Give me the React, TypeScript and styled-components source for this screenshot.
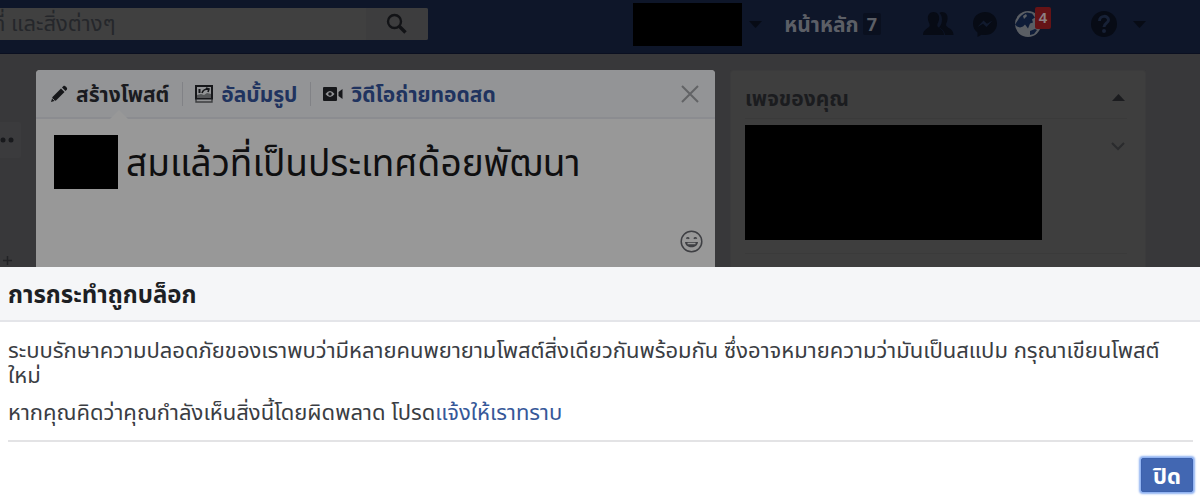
import React from "react";
import styled, { createGlobalStyle } from "styled-components";

const GlobalStyle = createGlobalStyle`
  *, *::before, *::after { box-sizing: border-box; }
  body {
    margin: 0;
    overflow-x: hidden;
    background: #fff;
    font-family: "Noto Sans", "Noto Sans Thai", "Liberation Sans", sans-serif;
  }
  button, input { font-family: inherit; }
  button { cursor: pointer; }
`;

const Page = styled.div`
  display: flex;
  flex-direction: column;
`;

const Dimmed = styled.div`
  background: #38383a;
  overflow: hidden;
`;

const NavBar = styled.header`
  display: flex;
  justify-content: space-between;
  align-items: flex-start;
  height: 54px;
  padding-right: 54px;
  background: #0e1629;
  border-bottom: 1px solid #0a0f20;
`;

const SearchForm = styled.form`
  display: flex;
  flex: 0 1 428px;
  min-width: 200px;
  height: 32px;
  margin-top: 8px;
  background: #404040;
  border-radius: 0 2px 2px 0;
  overflow: hidden;
`;

const SearchInput = styled.input`
  flex: 1;
  min-width: 0;
  height: 28px;
  margin-left: -8px;
  padding: 0;
  border: 0;
  outline: 0;
  background: transparent;
  font-size: 22px;
  color: #25272b;
  &::placeholder { color: #25272b; opacity: 1; }
`;

const SearchButton = styled.button`
  display: flex;
  align-items: center;
  justify-content: center;
  width: 62px;
  padding: 0;
  border: 0;
  background: #3d3d3e;
  color: #121316;
`;

const NavItems = styled.nav`
  display: flex;
  align-items: center;
  height: 48px;
`;

const Redacted = styled.div<{ $w: number; $h: number }>`
  flex: none;
  width: ${(p) => p.$w}px;
  height: ${(p) => p.$h}px;
  background: #000;
`;

const NavButton = styled.button<{ $gap: number }>`
  position: relative;
  display: flex;
  flex: none;
  align-items: center;
  margin-left: ${(p) => p.$gap}px;
  padding: 0;
  border: 0;
  background: none;
  color: #070b15;
`;

const HomeLink = styled.a`
  display: flex;
  align-items: center;
  gap: 4px;
  margin-left: 22px;
  font-size: 21px;
  line-height: 24px;
  font-weight: 700;
  color: #5c5f66;
  text-decoration: none;
  white-space: nowrap;
`;

const HomeCount = styled.span`
  padding: 0 4px;
  border-radius: 2px;
  background: #0a101f;
  font-size: 18px;
  line-height: 22px;
`;

const Alert = styled.span`
  position: absolute;
  top: -3px;
  right: -9px;
  width: 16px;
  border-radius: 2px;
  background: #651316;
  color: #8d8083;
  font: 700 15px/22px "Liberation Sans", sans-serif;
  text-align: center;
`;

const Columns = styled.div`
  display: grid;
  grid-template-columns: 21px minmax(0, 679fr) minmax(0, 416fr);
  column-gap: 15px;
  padding: 16px 54px 0 0;
`;

const LeftRail = styled.div`
  display: flex;
  flex-direction: column;
  justify-content: space-between;
  padding: 52px 0 2px;
`;

const MoreButton = styled.button`
  display: flex;
  align-items: center;
  height: 36px;
  padding: 0;
  border: 0;
  border-radius: 0 2px 2px 0;
  background: #3b3b3d;
  color: #18191c;
`;

const AddButton = styled.button`
  display: flex;
  padding: 0 0 0 3px;
  border: 0;
  background: none;
  color: #222326;
`;

const Composer = styled.section`
  display: flex;
  flex-direction: column;
  height: 197px;
  border-radius: 4px 4px 0 0;
  background: #989898;
  overflow: hidden;
`;

const ComposerTabs = styled.div`
  display: flex;
  align-items: center;
  height: 49px;
  padding: 0 16px 0 14px;
  background: #939496;
  border-bottom: 2px solid #8b8c90;
`;

const Tab = styled.button<{ $active?: boolean }>`
  position: relative;
  display: flex;
  flex: none;
  align-items: center;
  gap: 8px;
  height: 24px;
  padding: 0;
  border: 0;
  background: none;
  color: ${(p) => (p.$active ? "#1a1b1f" : "#20335f")};
  font-size: 21px;
  line-height: 24px;
  font-weight: 700;
  white-space: nowrap;
  & + & {
    margin-left: 13px;
    padding-left: 12px;
    border-left: 1px solid #818286;
  }
  svg { color: #16171a; }
`;

const TabPointer = styled.span`
  position: absolute;
  left: 60px;
  bottom: -13px;
  border: 9px solid transparent;
  border-top: 0;
  border-bottom-color: #989898;
`;

const CloseButton = styled.button`
  display: flex;
  margin-left: auto;
  padding: 0;
  border: 0;
  background: none;
  color: #626366;
`;

const ComposerBody = styled.div`
  display: flex;
  flex: 1;
  gap: 8px;
  padding: 16px 12px 14px 18px;
`;

const PostText = styled.p`
  flex: 1;
  margin: 0;
  color: #0f0f10;
  font-size: 37px;
  line-height: 54px;
  white-space: nowrap;
`;

const EmojiButton = styled.button`
  align-self: flex-end;
  display: flex;
  padding: 0;
  border: 0;
  background: none;
  color: #3e3f43;
`;

const PagesCard = styled.aside`
  padding: 0 18px 0 14px;
  border: 1px solid #3b3b3c;
  border-bottom: 0;
  border-radius: 3px 3px 0 0;
  background: #3e3e3e;
`;

const CardHeader = styled.div`
  display: flex;
  align-items: center;
  justify-content: space-between;
  height: 48px;
  padding: 6px 2px 0 0;
  color: #1b1c1f;
  border-bottom: 1px solid #3a3a3a;
`;

const CardTitle = styled.h2`
  margin: 0;
  font-size: 21px;
  line-height: 24px;
  font-weight: 700;
`;

const CardRow = styled.div`
  display: flex;
  justify-content: space-between;
  padding: 6px 2px 13px 0;
  border-bottom: 1px solid #3a3a3a;
  color: #2a2b2d;
`;

const RowToggle = styled.button`
  align-self: flex-start;
  display: flex;
  margin-top: 16px;
  padding: 0;
  border: 0;
  background: none;
  color: inherit;
`;

const Dialog = styled.section`
  background: #fff;
  color: #3a3d43;
`;

const DialogTitle = styled.h1`
  margin: 0;
  padding: 14px 8px 13px;
  border-bottom: 2px solid #e4e5e9;
  background: #f5f6f8;
  color: #1d1f24;
  font-size: 24px;
  line-height: 26px;
  font-weight: 700;
`;

const DialogBody = styled.div`
  margin: 0 7px 0 8px;
  padding: 15px 0 16px;
  border-bottom: 2px solid #e3e3e5;
`;

const Message = styled.p`
  margin: 0;
  font-size: 22px;
  line-height: 25px;
  & + & { margin-top: 12px; }
  a { color: #365899; text-decoration: none; }
`;

const DialogFooter = styled.footer`
  display: flex;
  justify-content: flex-end;
  padding: 16px 7px 9px;
`;

const PrimaryButton = styled.button`
  height: 34px;
  padding: 0 11px;
  border: 1px solid #3c61ad;
  border-radius: 2px;
  background: #4267b2;
  box-shadow: 0 0 2px 2px #8fb2f2;
  color: #fff;
  font-size: 22px;
  line-height: 24px;
  font-weight: 700;
`;

const Caret = ({ up = false }: { up?: boolean }) => (
  <svg width="13" height="7" viewBox="0 0 13 7" aria-hidden="true">
    <path d={up ? "M0 7 6.500 0 13 7Z" : "M0 0h13L6.500 7Z"} fill="currentColor" />
  </svg>
);

const SearchIcon = () => (
  <svg width="22" height="22" viewBox="0 0 22 22" fill="none" stroke="currentColor" aria-hidden="true">
    <circle cx="8.500" cy="8.500" r="6.500" strokeWidth="2.400" />
    <path d="m13.500 13.500 6 6" strokeWidth="3.400" />
  </svg>
);

const FriendsIcon = () => (
  <svg width="31" height="26" viewBox="0 0 31 26" fill="currentColor" aria-hidden="true">
    <path d="M19 1c4 0 6 3 5.500 7-.2 3-1.500 4-1.500 6 0 3 7.500 3 7.500 10H22c-.5-4-3-6-6-7.500 2-2 3-5 3-8 0-3-1-5-2.500-6.500C17.200 1.300 18 1 19 1Z" />
    <path d="M10.500 1c4 0 6 3 5.600 7-.3 3-1.800 4-1.800 6.500 0 3 6.700 3 6.700 9.500H0c0-6.500 6.700-6.500 6.700-9.500C6.700 12 5.200 11 4.900 8 4.500 4 6.500 1 10.500 1Z" />
  </svg>
);

const MessengerIcon = () => (
  <svg width="26" height="27" viewBox="0 0 26 27" aria-hidden="true">
    <path d="M13 1C6 1 1 6 1 12.500c0 4 1.700 7 4.500 9V26l4-2.300c1.200.3 2.300.4 3.500.4 7 0 12-5 12-11.600S20 1 13 1Z" fill="currentColor" />
    <path d="m5.500 16 6-6.500 3.500 3.300 5.500-3.300-6 6.500-3.500-3.300Z" fill="#111a2e" />
  </svg>
);

const GlobeIcon = () => (
  <svg width="28" height="28" viewBox="0 0 28 28" aria-hidden="true">
    <circle cx="14" cy="14" r="13" fill="#5a5e64" />
    <path d="M4 10c2-4 5-6.500 9-7.500l5 1 3 4-3 2 1 3-3 1-2 5-3-4-2 2-3 1-3-1-2-2Z" fill="#0e1c38" />
    <path d="m9 6 3-2 1 2-3 3Z" fill="#5a5e64" />
    <path d="m16 21 5-2 2 1-3 4-4 1Z" fill="#0e1c38" />
  </svg>
);

const HelpIcon = () => (
  <svg width="28" height="28" viewBox="0 0 28 28" fill="none" aria-hidden="true">
    <circle cx="14" cy="14" r="13" fill="currentColor" />
    <path d="M9.500 11c0-6 9-6 9-1 0 3-4.500 3.500-4.500 7" stroke="#172136" strokeWidth="3" />
    <circle cx="14" cy="21" r="2" fill="#172136" />
  </svg>
);

const PencilIcon = () => (
  <svg width="18" height="18" viewBox="0 0 18 18" fill="currentColor" aria-hidden="true">
    <path d="m1 17 1.500-5L11 3.500 14.500 7 6 15.500Z" />
    <path d="m12 2.500 1.500-1.500c1-1 4.500 2 3.400 3.400L15.500 6Z" />
    <path d="m2.200 13.300 2.500 2.500" stroke="#939496" strokeWidth="1" />
  </svg>
);

const AlbumIcon = () => (
  <svg width="18" height="18" viewBox="0 0 18 18" fill="none" stroke="currentColor" aria-hidden="true">
    <rect x="1" y="1" width="16" height="12.500" strokeWidth="2" />
    <path d="M1 14v3h16v-3" strokeWidth="1.400" opacity=".7" />
    <path d="M2 12v-2l4-1 3 1 3-2 4 1v3Z" fill="currentColor" stroke="none" opacity=".5" />
    <path d="M4.500 4v4" strokeWidth="2" />
    <path d="M7 8c1-3 3-4 6-4M11 3l3 1-1 3" strokeWidth="1.600" />
  </svg>
);

const VideoIcon = () => (
  <svg width="20" height="14" viewBox="0 0 20 14" aria-hidden="true">
    <path d="M1 0h12q1 0 1 1v12q0 1-1 1H1q-1 0-1-1V1q0-1 1-1Z" fill="currentColor" />
    <path d="m15.500 5 4-3v10l-4-3Z" fill="currentColor" />
    <path d="M2.500 7Q7 1 11.500 7 7 13 2.500 7Z" fill="#939496" />
    <circle cx="7" cy="7" r="1.800" fill="currentColor" />
  </svg>
);

const CloseIcon = () => (
  <svg width="18" height="18" viewBox="0 0 18 18" fill="none" stroke="currentColor" strokeWidth="2" aria-hidden="true">
    <path d="m1 1 16 16M17 1 1 17" />
  </svg>
);

const EmojiIcon = () => (
  <svg width="23" height="23" viewBox="0 0 23 23" fill="none" stroke="currentColor" aria-hidden="true">
    <circle cx="11.500" cy="11.500" r="10.300" strokeWidth="1.500" />
    <path d="M5 12h13c-.5 7-12.500 7-13 0Z" fill="currentColor" stroke="none" />
    <path d="M7.500 13.500h8" stroke="#989898" strokeWidth="1.400" />
    <path d="M6.500 8.800q1.300-2 2.600 0M14 8.800q1.300-2 2.600 0" strokeWidth="1.600" />
  </svg>
);

const DotsIcon = () => (
  <svg width="14" height="6" viewBox="0 0 14 6" fill="currentColor" aria-hidden="true">
    <circle cx="3" cy="3" r="2.500" />
    <circle cx="11" cy="3" r="2.500" />
  </svg>
);

const PlusIcon = () => (
  <svg width="9" height="9" viewBox="0 0 9 9" fill="none" stroke="currentColor" strokeWidth="1.500" aria-hidden="true">
    <path d="M4.500 0v9M0 4.500h9" />
  </svg>
);

const ChevronIcon = () => (
  <svg width="14" height="10" viewBox="0 0 14 10" fill="none" stroke="currentColor" strokeWidth="2" aria-hidden="true">
    <path d="m1 2 6 6 6-6" />
  </svg>
);

export default function App() {
  return (
    <Page>
      <GlobalStyle />
      <Dimmed>
        <NavBar>
          <SearchForm role="search" onSubmit={(e) => e.preventDefault()}>
            <SearchInput aria-label="ค้นหา" placeholder="ที่ และสิ่งต่างๆ" />
            <SearchButton type="submit" aria-label="ค้นหา"><SearchIcon /></SearchButton>
          </SearchForm>
          <NavItems>
            <Redacted $w={109} $h={43} />
            <NavButton $gap={7} aria-label="บัญชี"><Caret /></NavButton>
            <HomeLink href="#home">หน้าหลัก<HomeCount>7</HomeCount></HomeLink>
            <NavButton $gap={42} aria-label="เพื่อน"><FriendsIcon /></NavButton>
            <NavButton $gap={18} aria-label="ข้อความ"><MessengerIcon /></NavButton>
            <NavButton $gap={16} aria-label="การแจ้งเตือน"><GlobeIcon /><Alert>4</Alert></NavButton>
            <NavButton $gap={48} aria-label="ความช่วยเหลือ"><HelpIcon /></NavButton>
            <NavButton $gap={15} aria-label="เมนู"><Caret /></NavButton>
          </NavItems>
        </NavBar>
        <Columns>
          <LeftRail>
            <MoreButton aria-label="เพิ่มเติม"><DotsIcon /></MoreButton>
            <AddButton aria-label="เพิ่ม"><PlusIcon /></AddButton>
          </LeftRail>
          <Composer>
            <ComposerTabs>
              <Tab $active><PencilIcon />สร้างโพสต์<TabPointer /></Tab>
              <Tab><AlbumIcon />อัลบั้มรูป</Tab>
              <Tab><VideoIcon />วิดีโอถ่ายทอดสด</Tab>
              <CloseButton aria-label="ปิดหน้าต่างโพสต์"><CloseIcon /></CloseButton>
            </ComposerTabs>
            <ComposerBody>
              <Redacted $w={64} $h={54} />
              <PostText>สมแล้วที่เป็นประเทศด้อยพัฒนา</PostText>
              <EmojiButton aria-label="อีโมจิ"><EmojiIcon /></EmojiButton>
            </ComposerBody>
          </Composer>
          <PagesCard>
            <CardHeader><CardTitle>เพจของคุณ</CardTitle><Caret up /></CardHeader>
            <CardRow>
              <Redacted $w={297} $h={115} />
              <RowToggle aria-label="ขยาย"><ChevronIcon /></RowToggle>
            </CardRow>
          </PagesCard>
        </Columns>
      </Dimmed>
      <Dialog role="dialog" aria-labelledby="dialog-title">
        <DialogTitle id="dialog-title">การกระทำถูกบล็อก</DialogTitle>
        <DialogBody>
          <Message>
            ระบบรักษาความปลอดภัยของเราพบว่ามีหลายคนพยายามโพสต์สิ่งเดียวกันพร้อมกัน ซึ่งอาจหมายความว่ามันเป็นสแปม กรุณาเขียนโพสต์
            <br />
            ใหม่
          </Message>
          <Message>
            หากคุณคิดว่าคุณกำลังเห็นสิ่งนี้โดยผิดพลาด โปรด<a href="#report">แจ้งให้เราทราบ</a>
          </Message>
        </DialogBody>
        <DialogFooter>
          <PrimaryButton type="button">ปิด</PrimaryButton>
        </DialogFooter>
      </Dialog>
    </Page>
  );
}
